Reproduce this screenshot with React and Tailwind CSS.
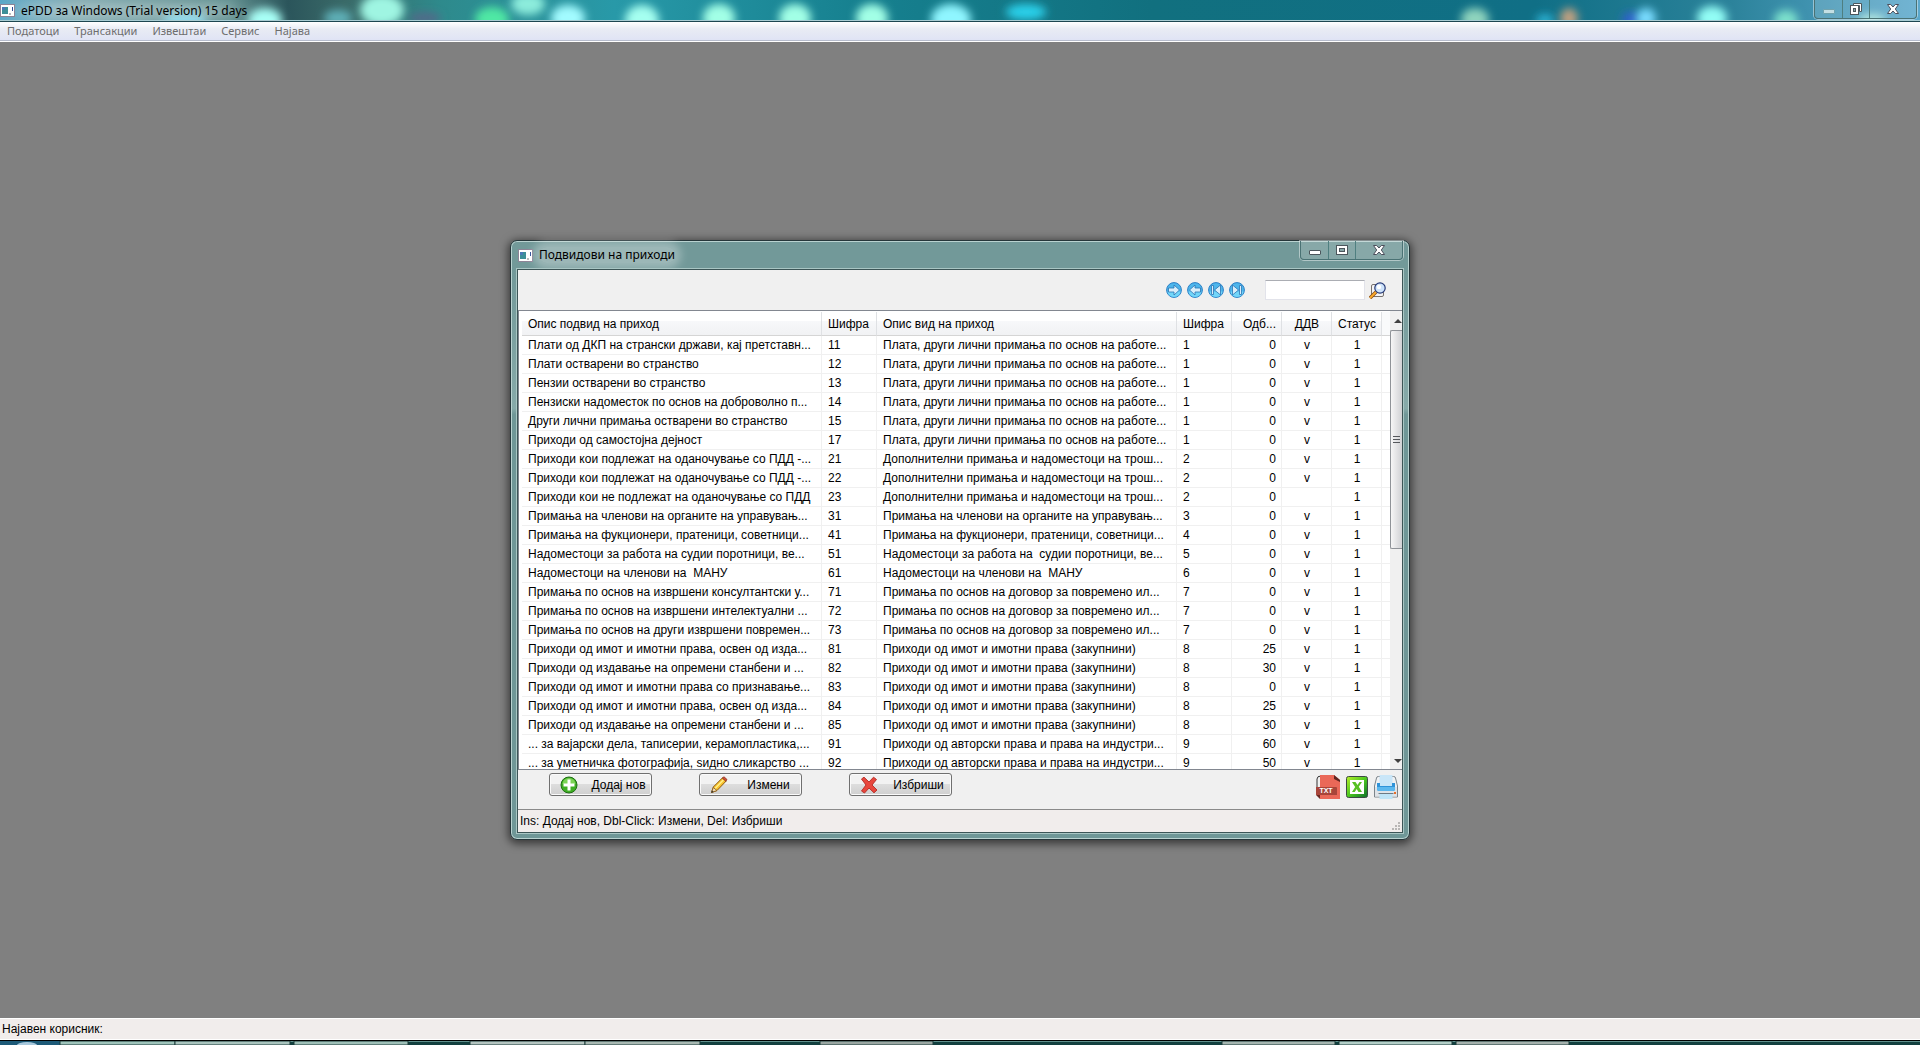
import React from 'react';

const INCOME_1 = 'Плата, други лични примања по основ на работе...';
const INCOME_2 = 'Дополнителни примања и надоместоци на трош...';
const INCOME_7 = 'Примања по основ на договор за повремено ил...';
const INCOME_8 = 'Приходи од имот и имотни права (закупнини)';
const INCOME_9 = 'Приходи од авторски права и права на индустри...';

const rows = [
    ['Плати од ДКП на странски држави, кај претставн...', 11, INCOME_1, 1, 0, 'v', 1],
    ['Плати остварени во странство', 12, INCOME_1, 1, 0, 'v', 1],
    ['Пензии остварени во странство', 13, INCOME_1, 1, 0, 'v', 1],
    ['Пензиски надоместок по основ на доброволно п...', 14, INCOME_1, 1, 0, 'v', 1],
    ['Други лични примања остварени во странство', 15, INCOME_1, 1, 0, 'v', 1],
    ['Приходи од самостојна дејност', 17, INCOME_1, 1, 0, 'v', 1],
    ['Приходи кои подлежат на оданочување со ПДД -...', 21, INCOME_2, 2, 0, 'v', 1],
    ['Приходи кои подлежат на оданочување со ПДД -...', 22, INCOME_2, 2, 0, 'v', 1],
    ['Приходи кои не подлежат на оданочување со ПДД', 23, INCOME_2, 2, 0, '', 1],
    ['Примања на членови на органите на управувањ...', 31, 'Примања на членови на органите на управувањ...', 3, 0, 'v', 1],
    ['Примања на фукционери, пратеници, советници...', 41, 'Примања на фукционери, пратеници, советници...', 4, 0, 'v', 1],
    ['Надоместоци за работа на судии поротници, ве...', 51, 'Надоместоци за работа на  судии поротници, ве...', 5, 0, 'v', 1],
    ['Надоместоци на членови на  МАНУ', 61, 'Надоместоци на членови на  МАНУ', 6, 0, 'v', 1],
    ['Примања по основ на извршени консултантски у...', 71, INCOME_7, 7, 0, 'v', 1],
    ['Примања по основ на извршени интелектуални ...', 72, INCOME_7, 7, 0, 'v', 1],
    ['Примања по основ на други извршени повремен...', 73, INCOME_7, 7, 0, 'v', 1],
    ['Приходи од имот и имотни права, освен од изда...', 81, INCOME_8, 8, 25, 'v', 1],
    ['Приходи од издавање на опремени станбени и ...', 82, INCOME_8, 8, 30, 'v', 1],
    ['Приходи од имот и имотни права со признавање...', 83, INCOME_8, 8, 0, 'v', 1],
    ['Приходи од имот и имотни права, освен од изда...', 84, INCOME_8, 8, 25, 'v', 1],
    ['Приходи од издавање на опремени станбени и ...', 85, INCOME_8, 8, 30, 'v', 1],
    ['... за вајарски дела, таписерии, керамопластика,...', 91, INCOME_9, 9, 60, 'v', 1],
    ['... за уметничка фотографија, ѕидно сликарство ...', 92, INCOME_9, 9, 50, 'v', 1],
];

const columns = [
    { label: 'Опис подвид на приход', width: 'w-[300px]', align: 'text-left' },
    { label: 'Шифра', width: 'w-[55px]', align: 'text-left' },
    { label: 'Опис вид на приход', width: 'w-[300px]', align: 'text-left' },
    { label: 'Шифра', width: 'w-[55px]', align: 'text-left' },
    { label: 'Одб...', width: 'w-[50px]', align: 'text-right' },
    { label: 'ДДВ', width: 'w-[50px]', align: 'text-center' },
    { label: 'Статус', width: 'w-[50px]', align: 'text-center' },
];

const menuItems = ['Податоци', 'Трансакции', 'Извештаи', 'Сервис', 'Најава'];

// Desktop shapes that show through the glass title bar: cx, cy, rx, ry, colour
const glassSpots = [
    [185, 20, 22, 8, '#7fd8ee'],
    [265, 20, 17, 12, '#a8fff6'],
    [338, 18, 14, 8, '#5fb0b8'],
    [382, 10, 22, 16, '#9ff5e2'],
    [425, 18, 16, 5, '#55688a'],
    [492, 19, 17, 12, '#4fe8a4'],
    [528, 4, 17, 11, '#8cecdc'],
    [568, 18, 17, 13, '#a2fbff'],
    [642, 20, 17, 15, '#a5fff0'],
    [719, 18, 16, 14, '#a2ffe6'],
    [795, 18, 16, 14, '#a2ffe6'],
    [872, 18, 16, 14, '#a2ffe6'],
    [951, 19, 20, 15, '#8ff6ff'],
    [1026, 12, 20, 8, '#2cd0ea'],
    [1475, 19, 14, 11, '#8fd4be'],
    [1545, 20, 9, 6, '#2bb1d2'],
    [1569, 18, 9, 10, '#c0a080'],
    [1631, 20, 9, 8, '#2f62cc'],
    [1646, 18, 10, 10, '#79dcff'],
    [1712, 18, 15, 12, '#92fdf5'],
    [1786, 20, 12, 10, '#7be0cc'],
    [1872, 20, 14, 6, '#a8e4dc'],
];

// Upper edge of the taskbar: start, width, colour
const taskButtons = [
    [60, 115, '#9fc4bb'],
    [175, 115, '#a9c4be'],
    [294, 114, '#9fc0b8'],
    [470, 115, '#b4c4c0'],
    [585, 115, '#a8b8b2'],
    [820, 113, '#9aa6a2'],
    [1222, 113, '#a5b5b0'],
    [1339, 113, '#b3cec7'],
    [1456, 113, '#a5b1ad'],
];

const AppIcon = () => (
    <svg width="15" height="13" viewBox="0 0 15 13" className="shrink-0">
        <rect x="0.5" y="0.5" width="14" height="12" fill="#fff" stroke="#8c8496" />
        <rect x="2" y="3" width="6" height="7" fill="#3d8f98" />
        <rect x="2" y="3" width="3" height="3" fill="#4a79b8" />
        <rect x="9" y="9" width="2" height="2" fill="#bbb" />
        <rect x="12" y="3" width="1" height="4" fill="#2e4d96" />
    </svg>
);

const MinGlyph = ({ dim }) => (
    <svg width="14" height="14" viewBox="0 0 14 14">
        <rect x="1.5" y="7.5" width="11" height="4" rx="0.5" fill={dim ? '#c4dfe4' : '#fff'} stroke={dim ? '#6fa3ad' : '#4c565c'} />
    </svg>
);

const MaxGlyph = () => (
    <svg width="14" height="14" viewBox="0 0 14 14">
        <rect x="1.5" y="2.5" width="11" height="9" fill="#fff" stroke="#4c565c" />
        <rect x="4.5" y="5.5" width="5" height="3" fill="#8aa9a9" stroke="#4c565c" />
    </svg>
);

const RestoreGlyph = () => (
    <svg width="14" height="14" viewBox="0 0 14 14">
        <path d="M4.5 1.5h8v8h-2v-6h-6z" fill="#fff" stroke="#4c565c" />
        <rect x="1.5" y="3.5" width="8" height="9" fill="#fff" stroke="#4c565c" />
        <rect x="4.5" y="6.5" width="2" height="3" fill="#8aa9a9" stroke="#4c565c" />
    </svg>
);

const CloseGlyph = () => (
    <svg width="14" height="14" viewBox="0 0 14 14">
        <path
            d="M1.5 2.5h3.2L7 5l2.3-2.5h3.2L9.3 7l3.2 4.5H9.3L7 9l-2.3 2.5H1.5L4.7 7z"
            fill="#fff"
            stroke="#4c4f5c"
        />
    </svg>
);

const navPaths = {
    next: 'M2.5 6H8V3l5.5 5L8 13v-3H2.5z',
    prev: 'M13.5 6H8V3L2.5 8 8 13v-3h5.5z',
    first: 'M3.5 3.5h2v9h-2zM12.5 3v10l-6-5z',
    last: 'M10.5 3.5h2v9h-2zM3.5 3v10l6-5z',
};

const NavButton = ({ kind, label }) => (
    <button type="button" aria-label={label} className="h-4 w-4">
        <svg width="16" height="16" viewBox="0 0 16 16">
            <circle cx="8" cy="8" r="7.4" fill="#4db6ec" stroke="#2b7fc6" />
            <path d="M1.5 9.5a6.6 6.6 0 0 0 13 0z" fill="#72d6f9" />
            <path d={navPaths[kind]} fill="#d9eefa" stroke="#2873b4" strokeWidth="0.8" />
        </svg>
    </button>
);

const SearchIcon = () => (
    <svg width="17" height="17" viewBox="0 0 17 17">
        <rect x="2.5" y="2.5" width="12" height="12" rx="1.5" fill="#f4f4f4" stroke="#77716e" />
        <path d="M1 16L7 10" stroke="#8a4a12" strokeWidth="3.4" />
        <path d="M1 16L7 10" stroke="#fbab2c" strokeWidth="1.8" />
        <circle cx="11" cy="6" r="5.2" fill="#cfe4fb" stroke="#263a78" strokeWidth="1.2" />
        <circle cx="10" cy="5" r="2.2" fill="#fff" />
    </svg>
);

const AddIcon = () => (
    <svg width="18" height="18" viewBox="0 0 18 18">
        <circle cx="9" cy="9" r="8" fill="#3fae23" stroke="#1f6d14" />
        <path d="M2.5 8a6.5 6 0 0 1 13 0z" fill="#7bd455" />
        <path d="M7.5 3.5h3v4h4v3h-4v4h-3v-4h-4v-3h4z" fill="#fff" />
    </svg>
);

const PencilIcon = () => (
    <svg width="18" height="18" viewBox="0 0 18 18">
        <path d="M1.5 16.5L3.3 11l9.2-9.2L16.2 5 7 14.5z" fill="#f9c22e" stroke="#8a5a12" />
        <path d="M5 12.5L13.3 4" stroke="#fff08a" strokeWidth="1.5" />
        <path d="M12.3 2L14 .8l3 2.700-1.200 1.800z" fill="#d0533a" stroke="#8c3020" strokeWidth="0.8" />
        <path d="M1.5 16.5l1.8-5L7 14.500z" fill="#f1dcb8" stroke="#8a5a12" strokeWidth="0.8" />
        <path d="M1.2 16.8l.8-2.3 1.7 1.5z" fill="#333" />
    </svg>
);

const DeleteIcon = () => (
    <svg width="18" height="18" viewBox="0 0 18 18">
        <path
            d="M1.5 3L4 1.2 9 6l4.5-4.8 3 2.3L12 9l5 5-3 2.8L9 12l-4.5 5-3-2L6 9z"
            fill="#e8463c"
            stroke="#b8322c"
            strokeLinejoin="round"
        />
    </svg>
);

const TxtIcon = () => (
    <svg width="24" height="24" viewBox="0 0 24 24">
        <path d="M1 12V4q0-3 4-3" fill="none" stroke="#333" />
        <path d="M4 0h14l6 5v19H4z" fill="#ea6858" />
        <path d="M18 0l6 5v2l-6-3z" fill="#5e2621" />
        <path d="M0 12h20q1 0 1 1v7H0z" fill="#a8453a" />
        <path d="M0 20l4 4v-4z" fill="#6b2720" />
        <text x="10" y="18" textAnchor="middle" fontSize="7" fontWeight="bold" fontFamily="Liberation Sans, sans-serif" fill="#fff">TXT</text>
    </svg>
);

const ExcelIcon = () => (
    <svg width="22" height="22" viewBox="0 0 22 22">
        <defs>
            <linearGradient id="xls" x1="0" y1="0" x2="1" y2="1">
                <stop offset="0" stopColor="#b8f02c" />
                <stop offset="0.5" stopColor="#4cc81e" />
                <stop offset="1" stopColor="#0c6e2c" />
            </linearGradient>
        </defs>
        <rect x="0.5" y="0.5" width="21" height="21" rx="2" fill="url(#xls)" stroke="#3c4a44" />
        <rect x="4" y="4" width="14" height="14" fill="#fff" />
        <path d="M6 6h3.500l2 3 2-3H16l-3.200 4.800L16 16h-3.500l-1.800-3-2 3H6l3.200-5z" fill="#57c022" />
    </svg>
);

const PrinterIcon = () => (
    <svg width="24" height="24" viewBox="0 0 24 24">
        <path d="M.5 22V11l2-8q0-1.500 2-1.500h15q2 0 2 1.500l2 8v11z" fill="#f0f2f4" stroke="#7c848a" />
        <path d="M1 12h22v9.500H1z" fill="#dfe3e7" />
        <rect x="5.5" y="0" width="13" height="11" fill="#c9e6f8" />
        <path d="M3 8h3v3h12V8h3v6q0 2-2 2H5q-2 0-2-2z" fill="#2f93d8" />
        <path d="M3 12h18v2q0 2-2 2H5q-2 0-2-2z" fill="#5cb8ee" />
        <rect x="5.5" y="18" width="13" height="6" fill="#bfe4f6" />
        <path d="M4.5 18.500h15" stroke="#6c7a84" />
        <rect x="20" y="17" width="2" height="2" fill="#e8702a" />
    </svg>
);

const WindowButtons = ({ main }) => (
    <div className="flex h-[19px] shrink-0 divide-x divide-[#4f7f80] self-start rounded-b border border-t-0 border-[#4a7274] bg-white/15 shadow-[0_0_0_1px_rgba(255,255,255,0.45)]">
        <button type="button" aria-label="Минимизирај" className="flex w-7 items-center justify-center">
            <MinGlyph dim={main} />
        </button>
        <button type="button" aria-label="Максимизирај" className="flex w-[27px] items-center justify-center">
            {main ? <RestoreGlyph /> : <MaxGlyph />}
        </button>
        <button type="button" aria-label="Затвори" className="flex w-[46px] items-center justify-center">
            <CloseGlyph />
        </button>
    </div>
);

const ActionButton = ({ icon, children }) => (
    <button
        type="button"
        className="flex h-[23px] w-[103px] items-center gap-2 rounded-[3px] border border-[#707070] bg-linear-to-b from-[#f2f2f2] from-50% via-[#dddddd] via-50% to-[#cfcfcf] pl-[10px] shadow-[inset_0_0_0_1px_#fafafa]"
    >
        {icon}
        <span className="flex-1 text-center">{children}</span>
    </button>
);

const MainTitleBar = () => (
    <header className="relative flex h-[22px] justify-between overflow-hidden border-b border-[#1d4650] bg-[#147d8e]">
        <svg className="absolute inset-0 h-full w-full" aria-hidden="true">
            <defs>
                <filter id="soft" x="-50%" y="-100%" width="200%" height="300%">
                    <feGaussianBlur stdDeviation="4" />
                </filter>
                <filter id="wide" x="-50%" y="-200%" width="200%" height="500%">
                    <feGaussianBlur stdDeviation="14 6" />
                </filter>
                <linearGradient id="bar">
                    <stop offset="0" stopColor="#5aa7c8" />
                    <stop offset="0.04" stopColor="#7fa8ae" />
                    <stop offset="0.12" stopColor="#5c8c8c" />
                    <stop offset="0.15" stopColor="#2b555b" />
                    <stop offset="0.18" stopColor="#3a6a68" />
                    <stop offset="0.23" stopColor="#2e8a8c" />
                    <stop offset="0.32" stopColor="#2899a8" />
                    <stop offset="0.45" stopColor="#16808f" />
                    <stop offset="0.6" stopColor="#11707f" />
                    <stop offset="0.8" stopColor="#106f86" />
                    <stop offset="0.9" stopColor="#2b829a" />
                    <stop offset="1" stopColor="#5ba8cc" />
                </linearGradient>
            </defs>
            <rect width="100%" height="100%" fill="url(#bar)" />
            {glassSpots.map(([cx, cy, rx, ry, fill]) => (
                <ellipse key={cx} cx={cx} cy={cy} rx={rx} ry={ry} fill={fill} filter="url(#soft)" />
            ))}
            <rect x="20" y="3" width="215" height="16" fill="#d5e2e2" opacity="0.45" filter="url(#wide)" />
            <rect y="20" width="100%" height="1" fill="#a8ccd2" />
        </svg>
        <div className="relative flex items-center gap-[6px]">
            <AppIcon />
            <h1 className="font-['Noto_Sans',sans-serif] text-xs text-black">ePDD за Windows (Trial version) 15 days</h1>
        </div>
        <div className="relative mr-[3px] flex">
            <WindowButtons main />
        </div>
    </header>
);

const MainMenu = () => (
    <nav className="flex h-5 items-center gap-[15px] border-b border-white bg-linear-to-b from-white from-0% via-[#e9ecf4] via-35% to-[#dfe3f5] pl-[7px] font-['Noto_Sans',sans-serif] text-[11px] text-[#6d6d6d] shadow-[inset_0_-1px_0_#b6bccc]">
        {menuItems.map((item) => (
            <a key={item} href="#">{item}</a>
        ))}
    </nav>
);

const IncomeTable = () => (
    <div className="flex min-h-0 flex-1 overflow-hidden border-y border-l border-[#828790] bg-white">
        <div className="min-w-0 flex-1 overflow-hidden pt-px pl-[3px]">
            <table className="w-full table-fixed border-separate border-spacing-0">
                <thead>
                    <tr className="h-6">
                        {columns.map((col, i) => (
                            <th
                                key={i}
                                scope="col"
                                className={`${col.width} ${col.align} overflow-hidden border-r border-b border-r-[#dfe1e4] border-b-[#d5d5d5] bg-linear-to-b from-white from-40% via-[#f7f8fa] via-40% to-[#f1f2f4] pr-[5px] pl-[6px] font-normal whitespace-nowrap`}
                            >
                                {col.label}
                            </th>
                        ))}
                        <td className="border-b border-[#d5d5d5] bg-[#f9fafb]" />
                    </tr>
                </thead>
                <tbody>
                    {rows.map((row) => (
                        <tr key={row[1]} className="h-[19px]">
                            {row.map((cell, i) => (
                                <td
                                    key={i}
                                    className={`${columns[i].align} overflow-hidden border-r border-b border-[#f0f0f0] pr-[5px] pl-[6px] whitespace-pre`}
                                >
                                    {cell}
                                </td>
                            ))}
                            <td className="border-b border-[#f0f0f0]" />
                        </tr>
                    ))}
                </tbody>
            </table>
        </div>
        <div className="flex w-3 shrink-0 flex-col overflow-hidden bg-[#f0f0f0]">
            <button type="button" aria-label="Нагоре" className="flex h-[19px] shrink-0 items-center justify-end">
                <svg width="8" height="4" viewBox="0 0 8 4"><path d="M0 4l4-4 4 4z" fill="#404040" /></svg>
            </button>
            <div className="flex h-[219px] shrink-0 items-center justify-end rounded-l-xs border border-r-0 border-[#8f9398] bg-linear-to-r from-[#f6f6f6] to-[#d0d1d4] pr-px">
                <svg width="8" height="9" viewBox="0 0 8 9">
                    <path d="M0 1.5h7M0 4.5h7M0 7.5h7" stroke="#55585c" />
                </svg>
            </div>
            <button type="button" aria-label="Надолу" className="mt-auto flex h-[17px] shrink-0 items-center justify-end">
                <svg width="8" height="4" viewBox="0 0 8 4"><path d="M0 0l4 4 4-4z" fill="#404040" /></svg>
            </button>
        </div>
    </div>
);

const IncomeDialog = () => (
    <section className="flex h-[600px] w-[900px] flex-col rounded-[7px] border border-[#26363a] bg-linear-to-b from-[#729999] from-5% via-[#86aaa9] via-28% to-[#6f9797] to-29% px-[6px] pb-[6px] shadow-[0_2px_8px_2px_rgba(0,0,0,0.55),inset_0_0_0_1px_#b9d2d0]">
        <div className="flex h-[28px] shrink-0 justify-between">
            <div className="flex items-center gap-[6px] pl-px">
                <AppIcon />
                <h2 className="rounded-full bg-white/30 font-['Noto_Sans',sans-serif] text-xs text-black shadow-[0_0_8px_6px_rgba(255,255,255,0.3)]">Подвидови на приходи</h2>
            </div>
            <WindowButtons />
        </div>
        <div className="flex min-h-0 flex-1 flex-col border border-[#3c5556] bg-[#f0f0f0] shadow-[0_0_0_1px_#a9c6c4]">
            <div className="flex h-10 shrink-0 items-center justify-end pr-4">
                <div className="flex gap-[5px]">
                    <NavButton kind="next" label="Следен" />
                    <NavButton kind="prev" label="Претходен" />
                    <NavButton kind="first" label="Прв" />
                    <NavButton kind="last" label="Последен" />
                </div>
                <input
                    type="text"
                    aria-label="Барај"
                    className="ml-5 h-5 w-[100px] border border-[#e2e3ea] border-t-[#abadb3] bg-white px-1 outline-none"
                />
                <button type="button" aria-label="Барај" className="ml-1">
                    <SearchIcon />
                </button>
            </div>
            <IncomeTable />
            <div className="flex h-[39px] shrink-0 items-start justify-between pt-[3px] pr-1 pl-[31px]">
                <div className="flex gap-[47px]">
                    <ActionButton icon={<AddIcon />}>Додај нов</ActionButton>
                    <ActionButton icon={<PencilIcon />}>Измени</ActionButton>
                    <ActionButton icon={<DeleteIcon />}>Избриши</ActionButton>
                </div>
                <div className="flex items-center gap-[6px] pt-[2px]">
                    <button type="button" aria-label="TXT"><TxtIcon /></button>
                    <button type="button" aria-label="Excel"><ExcelIcon /></button>
                    <button type="button" aria-label="Печати"><PrinterIcon /></button>
                </div>
            </div>
            <footer className="flex h-[23px] shrink-0 items-center justify-between border-t border-[#8a8a8a] bg-[#f1edec] pl-[2px]">
                <span>Ins: Додај нов, Dbl-Click: Измени, Del: Избриши</span>
                <svg width="12" height="12" viewBox="0 0 12 12" className="self-end">
                    <path d="M8 2h2v2H8zM5 5h2v2H5zM8 5h2v2H8zM2 8h2v2H2zM5 8h2v2H5zM8 8h2v2H8z" fill="#b9b6b5" />
                </svg>
            </footer>
        </div>
    </section>
);

const App = () => (
    <div className="flex min-h-screen flex-col bg-[#808080] font-['Liberation_Sans',sans-serif] text-xs text-black">
        <MainTitleBar />
        <MainMenu />
        <main className="flex flex-1 items-start justify-center pt-[198px]">
            <IncomeDialog />
        </main>
        <footer className="flex h-[22px] items-center border-y border-white bg-[#f1edec] pl-[2px]">Најавен корисник:</footer>
        <div className="h-[5px] overflow-hidden border-t border-black bg-[#12403f]" aria-hidden="true">
            <svg className="block h-1 w-full">
                <rect width="100%" height="1" fill="#5f8f8c" />
                <rect width="60" height="4" fill="#1d5a78" />
                <ellipse cx="27" cy="4" rx="10" ry="3" fill="#a8c8dc" />
                {taskButtons.map(([x, width, fill]) => (
                    <rect key={x} x={x} width={width} height="4" fill={fill} stroke="#1c3c3a" />
                ))}
            </svg>
        </div>
    </div>
);

export default App;
